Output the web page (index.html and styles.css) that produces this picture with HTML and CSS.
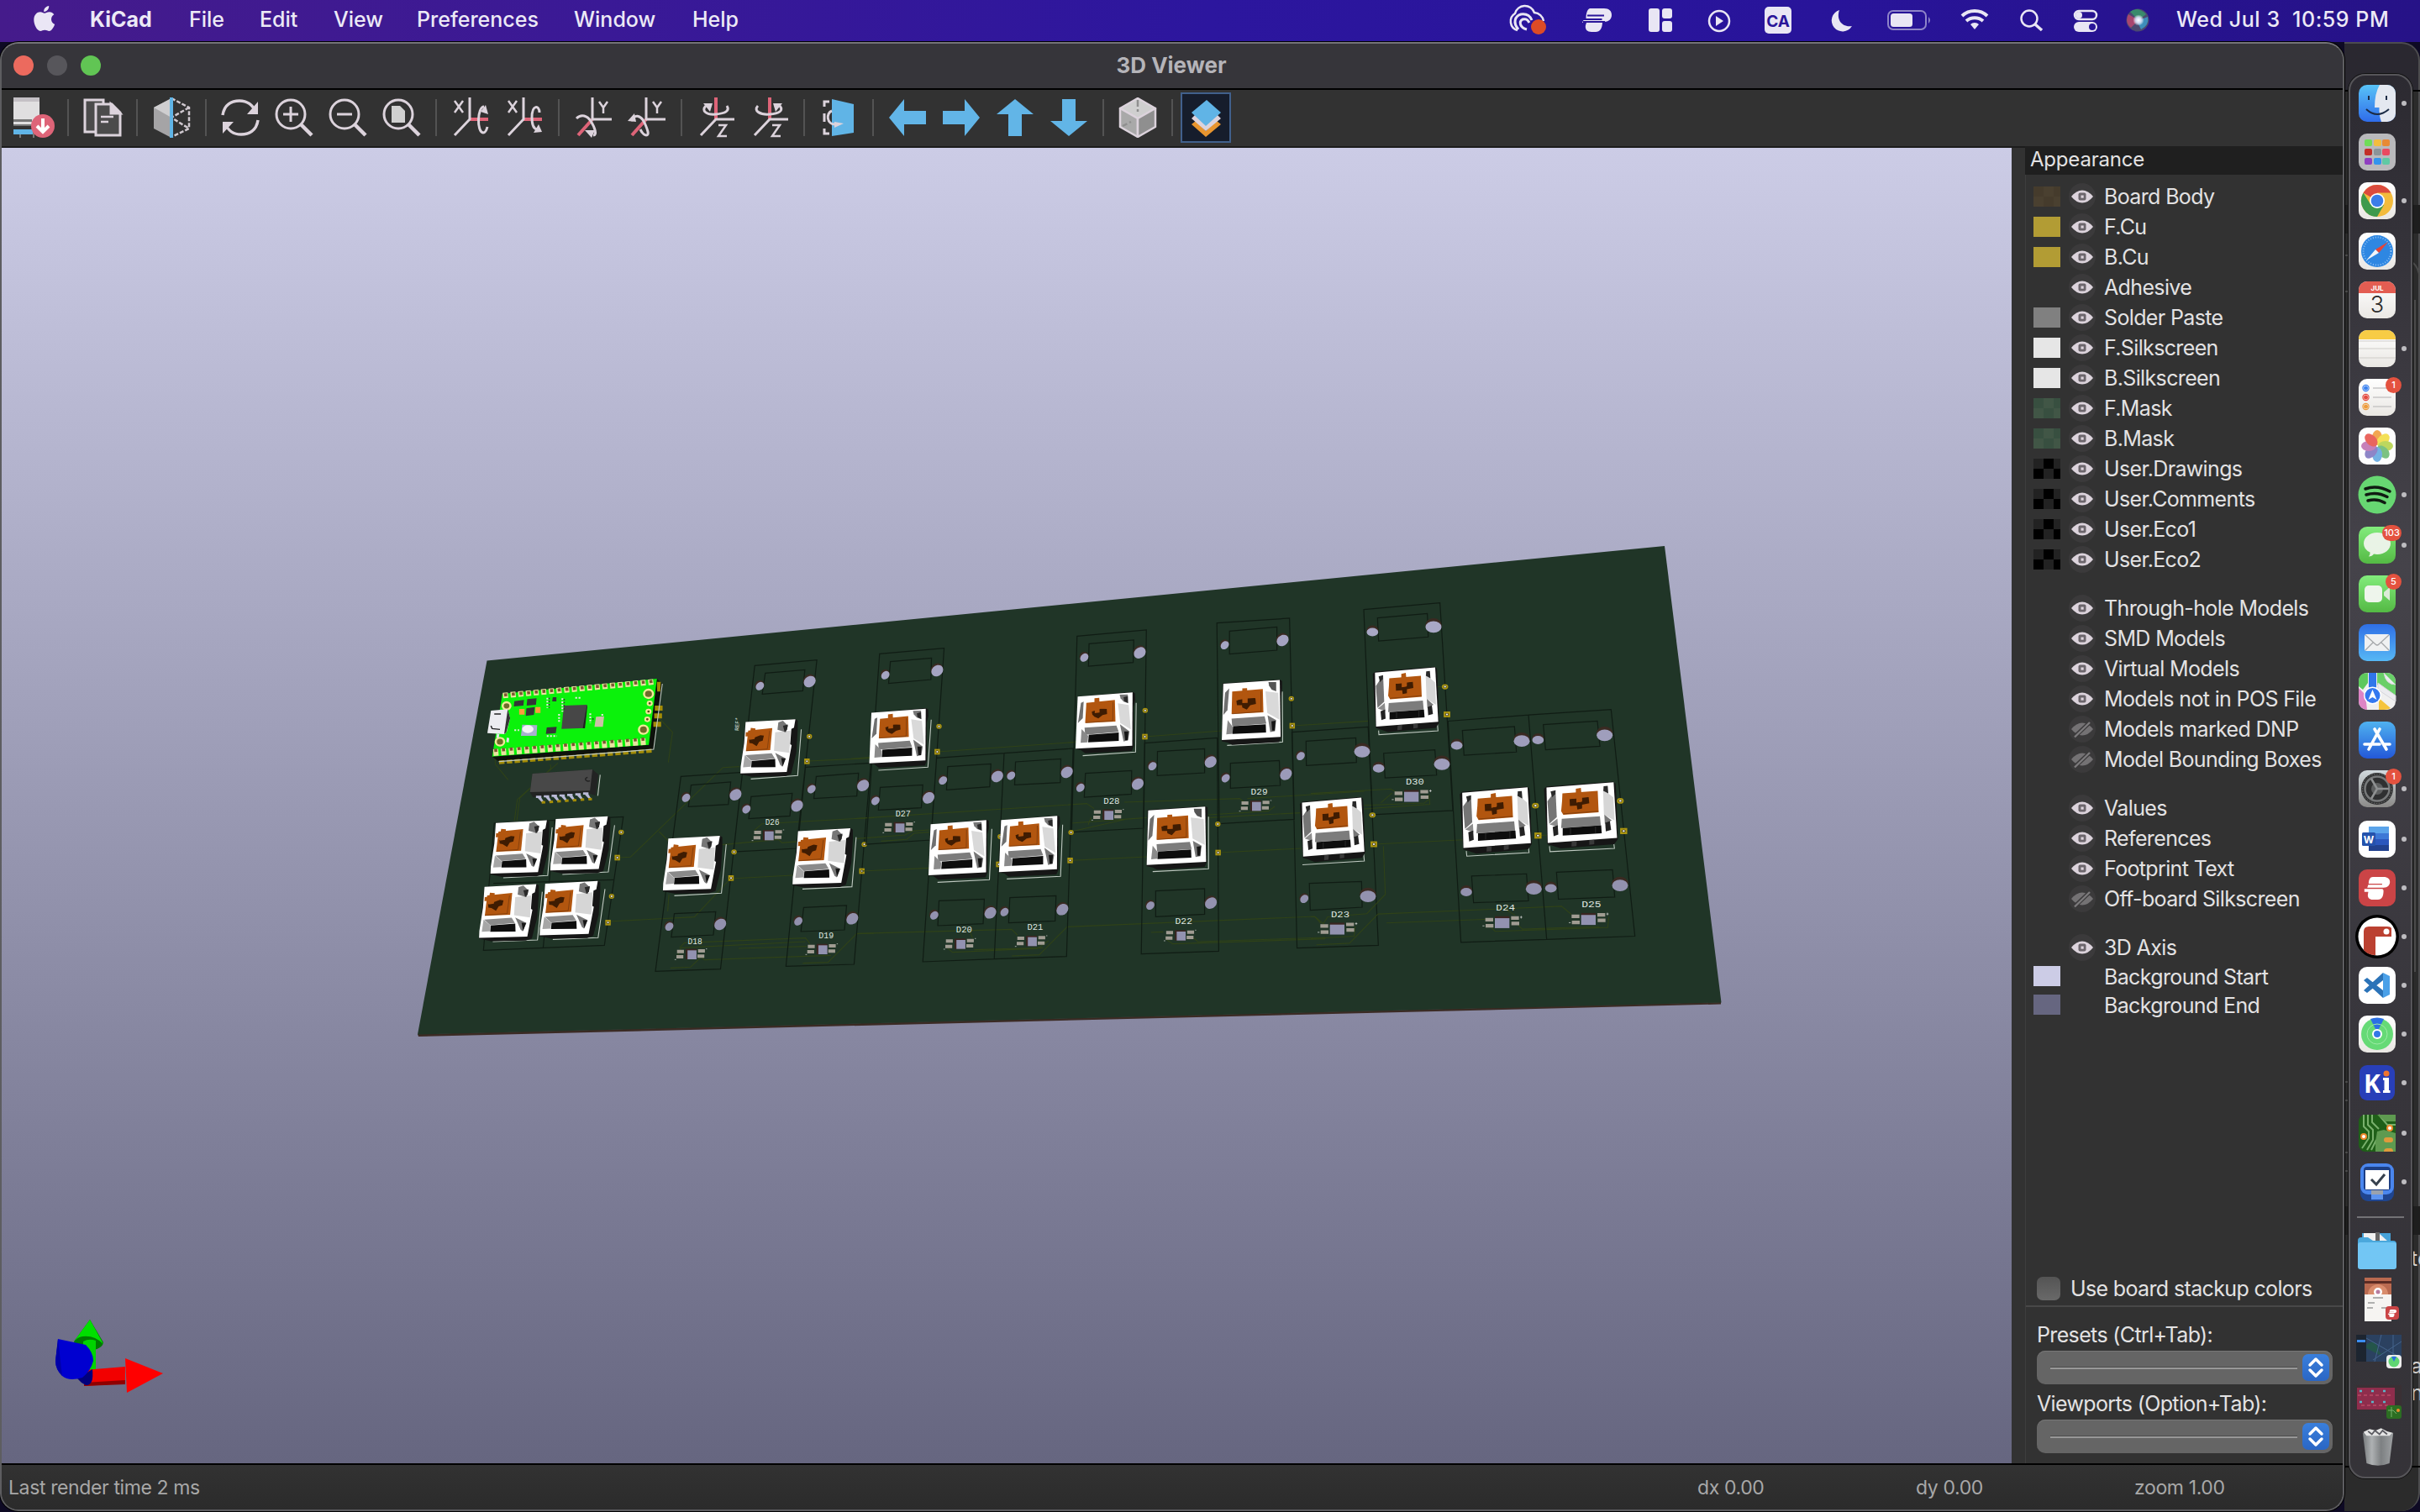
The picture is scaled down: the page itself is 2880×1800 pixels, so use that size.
FILE: index.html
```html
<!DOCTYPE html>
<html lang="en">
<head>
<meta charset="utf-8">
<title>3D Viewer</title>
<link rel="stylesheet" href="styles.css">
</head>
<body>
<svg class="defs" width="0" height="0" aria-hidden="true">
  <defs>
    <symbol id="eye" viewBox="0 0 32 32"><circle cx="16" cy="16" r="16" fill="#3b3a3b"/><path d="M3 16Q9 8.500 16 8.500T29 16Q23 23.500 16 23.500T3 16Z" fill="#dcd3dc"/><rect x="11.500" y="11.500" width="9" height="9" rx="2" fill="#6c666c"/><rect x="14.500" y="14.500" width="3.200" height="3.200" fill="#dcd3dc"/></symbol>
    <symbol id="eye-off" viewBox="0 0 32 32"><circle cx="16" cy="16" r="16" fill="#3b3a3b"/><path d="M3 16Q9 8.500 16 8.500T29 16Q23 23.500 16 23.500T3 16Z" fill="#747274"/><path d="M6 26L26 7" stroke="#3b3a3b" stroke-width="5"/><path d="M7 25.500L25 8" stroke="#7d7b7d" stroke-width="2.400"/></symbol>
    <symbol id="express" viewBox="0 0 36 32"><path d="M12 0h15c6 0 9 3 9 7s-3 8-9 8h-1H4l1.500-4H25v-1.500H6C6 4 8 0 12 0ZM0 17h26v1.500H27c0 9-2 13.500-8 13.500H12c-5 0-8-3-7-8l.5-3H0Z"/></symbol>
    <linearGradient id="metal" x1="0" y1="0" x2="0" y2="1"><stop offset="0" stop-color="#d2dade"/><stop offset="1" stop-color="#8b8a88"/></linearGradient>
    <linearGradient id="paper" x1="0" y1="0" x2="0" y2="1"><stop offset="0" stop-color="#fff"/><stop offset="1" stop-color="#e9e7e3"/></linearGradient>
    <linearGradient id="green" x1="0" y1="0" x2="0" y2="1"><stop offset="0" stop-color="#82ec7c"/><stop offset="1" stop-color="#54b944"/></linearGradient>
    <linearGradient id="blue" x1="0" y1="0" x2="0" y2="1"><stop offset="0" stop-color="#2f6fe6"/><stop offset="1" stop-color="#57b8f5"/></linearGradient>
    <linearGradient id="blue2" x1="0" y1="0" x2="0" y2="1"><stop offset="0" stop-color="#4fb2f0"/><stop offset="1" stop-color="#2358d8"/></linearGradient>
    <linearGradient id="finder" x1="0" y1="0" x2="0" y2="1"><stop offset="0" stop-color="#58c3f7"/><stop offset="1" stop-color="#2f6cea"/></linearGradient>
    <linearGradient id="trash" x1="0" y1="0" x2="1" y2="0"><stop offset="0" stop-color="#76797b"/><stop offset=".3" stop-color="#aeb1b3"/><stop offset=".6" stop-color="#7d8082"/><stop offset="1" stop-color="#9ea1a3"/></linearGradient>
    <radialGradient id="siri"><stop offset="0" stop-color="#fff"/><stop offset=".3" stop-color="#cfd8f2"/><stop offset=".6" stop-color="#fff" stop-opacity="0"/></radialGradient>

    <!-- key switch seen from its right-hand side -->
    <g id="sw1">
      <path d="M883 775L1055 764L1063 770L1063 800L1058 885L1040 962L1020 970L905 972L865 963Z" fill="#161616"/>
      <path d="M883 775L1055 765L1050 795L1041 800L1037 855L1042 858L1025 955L865 960L866 935L878 850Z" fill="#fff"/>
      <path d="M985 812L1038 806L1034 886L981 878Z" fill="#d6d6d6"/>
      <path d="M996 776L1012 770L1029 788L1022 812L993 803Z" fill="#777"/>
      <path d="M1012 788L1029 784L1026 803L1018 812Z" fill="#2a2a2a"/>
      <path d="M892 806L975 797L968 876L884 880Z" fill="#b2560f"/>
      <path d="M966 806L958 872L885 878" fill="none" stroke="#74370a" stroke-width="2"/>
      <path d="M895 838L934 822L946 824L942 842L930 846L921 862L906 852L896 850Z" fill="#3f1c02"/>
      <path d="M901 796L917 798L916 810L934 809L933 821L916 823L914 836L897 839L898 826L883 827L884 812L899 811Z" fill="#b2560f"/>
      <path d="M882 894L973 887L984 906L902 914Z" fill="#8a8a8a"/>
      <path d="M880 894L903 916L901 936L874 938Z" fill="#a6a6a6"/>
      <path d="M904 915L985 908L986 937L902 938Z" fill="#0d0d0d"/>
      <path d="M985 886L1022 906L1010 936L1003 930Z" fill="#777"/>
      <path d="M1006 905L1021 906L1011 935Z" fill="#161616"/>
    </g>
    <!-- key switch, partly turned -->
    <g id="sw2">
      <path d="M734 268L918 251L926 256L927 280L921 305L922 445L915 462L760 470L745 458L729 455Z" fill="#161616"/>
      <path d="M735 268L918 253L917 443L728 454Z" fill="#fff"/>
      <path d="M746 290L755 286L752 345L736 362Z" fill="#6f6f6f"/>
      <path d="M869 292L905 298L912 385L877 362Z" fill="#d9d9d9"/>
      <path d="M875 261L902 260L904 292L888 286L878 274Z" fill="#777"/>
      <path d="M888 270L902 266L902 290L890 284Z" fill="#2a2a2a"/>
      <path d="M764 290L859 280L861 357L760 362Z" fill="#b2560f"/>
      <path d="M853 288L852 354L762 361" fill="none" stroke="#74370a" stroke-width="2"/>
      <path d="M782 322L810 311L832 312L833 330L818 334L804 346L791 340L784 332Z" fill="#3f1c02"/>
      <path d="M791 274L807 272L808 296L824 295L824 309L808 311L808 325L792 327L792 315L775 316L776 302L791 301Z" fill="#b2560f"/>
      <path d="M758 379L864 371L872 394L760 404Z" fill="#7c7c7c"/>
      <path d="M748 384L770 408L768 431L745 433Z" fill="#8a8a8a"/>
      <path d="M772 404L872 396L872 426L770 431Z" fill="#0d0d0d"/>
      <path d="M876 367L908 392L903 424L888 428Z" fill="#777"/>
      <path d="M890 392L904 392L902 424L893 424Z" fill="#161616"/>
    </g>
    <!-- key switch, nearly front-on -->
    <g id="sw3">
      <path d="M968 672L1160 659L1168 664L1168 690L1164 720L1166 858L1158 876L1000 886L985 878L965 873Z" fill="#161616"/>
      <path d="M970 674L1160 661L1163 858L965 869Z" fill="#fff"/>
      <path d="M976 705L990 690L984 765L970 782Z" fill="#6f6f6f"/>
      <path d="M1112 700L1155 705L1159 798L1118 775Z" fill="#d9d9d9"/>
      <path d="M1122 668L1148 668L1148 700L1133 694L1124 680Z" fill="#555"/>
      <path d="M1000 701L1103 692L1105 773L998 779Z" fill="#b2560f"/>
      <path d="M1097 700L1097 770L1000 778" fill="none" stroke="#74370a" stroke-width="2"/>
      <path d="M1014 733L1046 720L1078 724L1080 744L1061 748L1049 763L1034 756L1033 748L1016 748Z" fill="#3f1c02"/>
      <path d="M1034 690L1050 689L1051 711L1074 710L1074 723L1052 725L1052 740L1034 741L1034 728L1017 729L1018 715L1034 714Z" fill="#b2560f"/>
      <path d="M998 795L1109 787L1115 812L1000 821Z" fill="#7c7c7c"/>
      <path d="M985 800L1003 825L1001 847L980 849Z" fill="#8a8a8a"/>
      <path d="M1003 821L1113 814L1114 843L1001 848Z" fill="#0d0d0d"/>
      <path d="M1119 783L1148 800L1144 838L1128 841Z" fill="#777"/>
      <path d="M1132 804L1146 802L1143 836L1134 836Z" fill="#161616"/>
    </g>
    <!-- key switch, front-on -->
    <g id="sw4">
      <path d="M221 424L230 417L442 402L450 408L452 432L458 576L446 592L275 605L250 597L232 592Z" fill="#161616"/>
      <path d="M229 420L444 404L455 573L233 588Z" fill="#fff"/>
      <path d="M232 462L258 428L262 510L238 530Z" fill="#757575"/>
      <path d="M410 425L443 450L447 520L413 502Z" fill="#d6d6d6"/>
      <path d="M242 432L258 428L257 440L247 450Z" fill="#2a2a2a"/>
      <path d="M412 416L425 415L427 438L411 430Z" fill="#2a2a2a"/>
      <path d="M280 438L393 430L396 495L283 503L276 492L279 460Z" fill="#b2560f"/>
      <path d="M283 500L395 492" stroke="#74370a" stroke-width="2"/>
      <path d="M303 455L325 453L325 466L343 462L343 450L364 449L366 468L343 472L343 484L328 487L326 475L304 476Z" fill="#3f1c02"/>
      <path d="M323 424L339 421L341 440L360 440L361 449L342 451L342 463L325 465L325 453L304 455L304 446L323 444Z" fill="#b2560f"/>
      <path d="M278 515L400 507L403 535L276 543Z" fill="#7c7c7c"/>
      <path d="M281 543L404 535L406 559L281 566Z" fill="#0d0d0d"/>
      <path d="M306 543L306 562M386 538L386 558" stroke="#2a2a2a" stroke-width="3"/>
      <path d="M239 532L264 514L266 540Z" fill="#8c8c8c"/>
      <path d="M249 540L265 535L267 563L252 568Z" fill="#222"/>
      <path d="M414 502L438 520L416 530Z" fill="#777"/>
      <path d="M417 527L432 522L436 549L419 553Z" fill="#222"/>
      <path d="M310 584L326 583L325 598L309 599ZM366 580L382 579L382 592L366 594Z" fill="#393939"/>
    </g>
    <g id="holeS"><ellipse cx="-2" cy="-2" rx="15" ry="17" transform="rotate(25)" fill="#3a2a22"/><ellipse cx="1" cy="1" rx="12.500" ry="16" transform="rotate(35)"/></g>
    <g id="holeL"><ellipse cx="-2" cy="-2" rx="20" ry="23" transform="rotate(25)" fill="#3a2a22"/><ellipse cx="1" cy="1" rx="18" ry="22" transform="rotate(40)"/></g>
    <g id="holeSr"><ellipse cx="0" cy="-3" rx="21" ry="16" fill="#3a2a22"/><ellipse cx="0" cy="2" rx="20.500" ry="13"/></g>
    <g id="holeLr"><ellipse cx="0" cy="-4" rx="29" ry="21" fill="#3a2a22"/><ellipse cx="0" cy="2" rx="28.500" ry="18"/></g>
    <g id="padR"><circle r="9" fill="#ab9510"/><circle r="4.500" fill="#3d3a20"/><circle r="3" fill="#eee"/></g>
    <g id="padQ"><rect x="-9" y="-10" width="18" height="20" fill="#ab9510"/><circle r="5" fill="#3d3a20"/><circle r="3" fill="#eee"/></g>
    <g id="led"><path d="M-48-16h23v12h-23zM-50 3h23v12h-23zM22-18h23v12h-23zM20 1h23v12h-23z" fill="#a09c92"/><path d="M-19-19h36v37h-36z" fill="#3a2521"/><path d="M-13-14h30v32h-30z" fill="#9292b0"/><path d="M-56 19h5M48-19h4" stroke="#ddd" stroke-width="2"/></g>
    <g id="ledr"><path d="M-60-16h28v11h-28zM-59 3h28v11h-28zM32-21h28v11h-28zM33-4h28v11h-28z" fill="#a09c92"/><path d="M-26-21h52v10h-52z" fill="#3a2521"/><path d="M-26-15h52v31h-52z" fill="#9292b0"/><path d="M-70 9h7M64-18h8M68-22v8" stroke="#ddd" stroke-width="2"/></g>
  </defs>
</svg>

<header class="menubar">
  <svg class="apple" viewBox="0 0 26 32" fill="#eae6f5"><path d="M18.200 0c.3 3.800-2.800 7-6 7C11.700 3.600 15 .3 18.200 0ZM13 8.800c1.500 0 3.300-1.700 6-1.500 2 .1 4 1 5.300 2.900-4.900 3-4 9.800.9 11.700-1 2.700-3.700 8-6.700 8.100-2 0-2.700-1.200-5.200-1.200s-3.300 1.200-5.200 1.200C4 30 .3 22 .3 16.800.3 10.500 4.200 7.300 7.900 7.300c2.200 0 3.800 1.500 5.100 1.500Z"/></svg>
  <b class="m m1">KiCad</b><span class="m m2">File</span><span class="m m3">Edit</span><span class="m m4">View</span><span class="m m5">Preferences</span><span class="m m6">Window</span><span class="m m7">Help</span>
  <svg class="tray" viewBox="1780 0 800 48" fill="none" stroke="#e9e6f4" stroke-width="2.500">
    <path d="M1806 36a11 11 0 0 1-3-20 12 12 0 0 1 23-1 12 12 0 0 1 11 10"/><path d="M1807 35c-7-8-4-16 3-18 7-1 11 2 13 7M1817 35c-8-2-10-9-5-12 4-1 6 0 8 4" stroke-width="3"/><circle cx="1831" cy="32" r="9" fill="#dd4b26" stroke="none"/>
    <g fill="#e9e6f4" stroke="none"><path d="M1892 10h17c6 0 9 3 9 8s-4 8-9 8h-2c0 8-3 12-8 12h-5c-5 0-8-3-7-8l1-3h-5l1.500-3h22v-2h-19c0-7 2-12 5-12Z"/><path d="M1889 18.500h20M1884 26h26" stroke="#2a1599" stroke-width="2"/>
    <rect x="1962" y="10" width="13" height="28" rx="3"/><rect x="1978" y="10" width="12" height="12" rx="3"/><rect x="1978" y="25" width="12" height="13" rx="3"/>
    <path d="M2042 19l9 6-9 6Z"/><rect x="2100" y="8" width="32" height="32" rx="5"/></g>
    <circle cx="2046" cy="25" r="12"/>
    <text x="2116" y="32" text-anchor="middle" class="ca">CA</text>
    <path d="M2189 12a13 13 0 1 0 15 19c-12 2-19-8-15-19Z" fill="#e9e6f4" stroke="none"/>
    <rect x="2247" y="13" width="45" height="22" rx="6" stroke="#8e84c8" stroke-width="2"/><path d="M2295 20q4 4 0 8Z" fill="#8e84c8" stroke="none"/><rect x="2250" y="16" width="26" height="16" rx="3.500" fill="#e9e6f4" stroke="none"/>
    <path d="M2335 19a22 22 0 0 1 30 0M2340 25a15 15 0 0 1 20 0" stroke-width="4"/><path d="M2350 35l-5-6a7 7 0 0 1 10 0Z" fill="#e9e6f4" stroke="none"/>
    <circle cx="2415" cy="22" r="9.500"/><path d="M2422 29l8 7" stroke-width="3.500"/>
    <rect x="2469" y="13" width="26" height="10" rx="5"/><circle cx="2474" cy="18" r="4" fill="#e9e6f4" stroke="none"/><rect x="2468" y="26" width="28" height="12" rx="6" fill="#e9e6f4" stroke="none"/><circle cx="2490" cy="32" r="4" fill="#2a1599" stroke="none"/>
    <g stroke="none"><circle cx="2544" cy="24" r="13.500" fill="#4b4a70"/><path d="M2535 14q9-7 19 3l-9 7Z" fill="#3a8a6c"/><path d="M2533 17q-5 9 3 16l9-9Z" fill="#a8466f"/><path d="M2556 20q2 10-8 15l-5-10Z" fill="#3d8dbb"/><circle cx="2545" cy="24" r="11" fill="url(#siri)"/></g>
  </svg>
  <span class="clock">Wed Jul 3&nbsp; 10:59 PM</span>
</header>

<div class="desk">
<main class="window">
  <div class="titlebar"><i class="light red"></i><i class="light grey"></i><i class="light green"></i><h1>3D Viewer</h1></div>
  <nav class="toolbar">
    <svg class="tool" viewBox="0 0 48 48"><path d="M0 0h31v34H0z" fill="#e0dfe0"/><path d="M0 0h31v5H0z" fill="#c4c0c5"/><path d="M0 26h22v3H0zM0 32h22v2H0z" fill="#777"/><path d="M0 38h24v6H0z" fill="#60b4e6"/><path d="M8 44v4M24 36v12" stroke="#777" stroke-width="2"/><circle cx="35" cy="34" r="14" fill="#de6478"/><path d="M35 25v14M28 34l7 7 7-7" fill="none" stroke="#fff" stroke-width="4"/></svg><i class="sep"></i>
    <svg class="tool" viewBox="0 0 48 48" stroke="#dcd3dc" stroke-width="3" fill="#4b4b4b"><path d="M3 3h22v38H3z"/><path d="M16 8h19l10 10v27H16z"/><path d="M34 8v11h11z" fill="#dcd3dc"/><path d="M22 23h15M22 29h9" stroke-width="2.500"/></svg><i class="sep"></i>
    <svg class="tool" viewBox="0 0 48 48"><path d="M24 1L3 12v25l21 11z" fill="#a5a4a6"/><path d="M24 1L3 12l21 12z" fill="#cfced0"/><path d="M24 1l21 11v25L24 47M45 12L24 24l21 13" fill="none" stroke="#cfc8cf" stroke-width="2.500" stroke-dasharray="5 2"/><path d="M24 0v48" stroke="#60b4e6" stroke-width="4"/></svg><i class="sep"></i>
    <svg class="tool" viewBox="0 0 48 48" fill="none" stroke="#dcd3dc" stroke-width="3.500"><path d="M3 21C5 8 14 4 23 4s16 5 19 13M45 27c-2 13-11 17-20 17S9 39 6 31"/><path d="M45 5v15H32zM3 43V29h13z" fill="#dcd3dc" stroke="none"/></svg>
    <svg class="tool" viewBox="0 0 48 48" fill="none" stroke="#dcd3dc" stroke-width="3"><circle cx="20" cy="20" r="17"/><path d="M11 20h18M20 11v18"/><path d="M32 32l13 13" stroke-width="4.500"/></svg>
    <svg class="tool" viewBox="0 0 48 48" fill="none" stroke="#dcd3dc" stroke-width="3"><circle cx="20" cy="20" r="17"/><path d="M11 20h18"/><path d="M32 32l13 13" stroke-width="4.500"/></svg>
    <svg class="tool" viewBox="0 0 48 48" fill="none" stroke="#dcd3dc" stroke-width="3"><circle cx="20" cy="20" r="17"/><path d="M12 10h10l6 6v14H12z" fill="#d0d0d0" stroke="none"/><path d="M32 32l13 13" stroke-width="4.500"/></svg><i class="sep"></i>
    <svg class="tool" viewBox="0 0 48 48" fill="none" stroke="#dcd3dc" stroke-width="3"><path d="M23 26h22" stroke="#de6478" stroke-width="4"/><path d="M23 0v26L5 45"/><path d="M5 4l10 14M15 4L5 18" stroke-width="2.500"/><path d="M40 11c-8 0-9 30-1 31 3 0 4-3 5-7"/><path d="M36 17l6-8 3 11z" fill="#dcd3dc" stroke="none"/></svg>
    <svg class="tool" viewBox="0 0 48 48" fill="none" stroke="#dcd3dc" stroke-width="3"><path d="M23 26h22" stroke="#de6478" stroke-width="4"/><path d="M23 0v26L5 45"/><path d="M5 4l10 14M15 4L5 18" stroke-width="2.500"/><path d="M42 18c0-9-9-10-9 6 0 10 3 14 7 14"/><path d="M35 42l6-10 4 9z" fill="#dcd3dc" stroke="none"/></svg><i class="sep"></i>
    <svg class="tool" viewBox="0 0 48 48" fill="none" stroke="#dcd3dc" stroke-width="3"><path d="M23 26L6 45" stroke="#de6478" stroke-width="4"/><path d="M23 0v26h23"/><path d="M31 5l5 7 5-7M36 12v7" stroke-width="2.500"/><path d="M4 25c6-6 13-3 17 3 5 8 8 17 3 17"/><path d="M14 39l8 9 4-9z" fill="#dcd3dc" stroke="none"/></svg>
    <svg class="tool" viewBox="0 0 48 48" fill="none" stroke="#dcd3dc" stroke-width="3"><path d="M23 26L6 45" stroke="#de6478" stroke-width="4"/><path d="M23 0v26h23"/><path d="M31 5l5 7 5-7M36 12v7" stroke-width="2.500"/><path d="M5 28c4-8 11-8 16 2 4 9 6 15 2 15-3 0-5-3-7-7"/><path d="M1 28l8-9 2 10z" fill="#dcd3dc" stroke="none"/></svg><i class="sep"></i>
    <svg class="tool" viewBox="0 0 48 48" fill="none" stroke="#dcd3dc" stroke-width="3"><path d="M24 26V0" stroke="#de6478" stroke-width="4"/><path d="M46 26H24L6 45"/><path d="M27 33h9l-9 13h10" stroke-width="2.500"/><path d="M12 10c-6 6 1 11 12 10s17-4 13-10"/><path d="M9 7l11 0-3 10z" fill="#dcd3dc" stroke="none"/></svg>
    <svg class="tool" viewBox="0 0 48 48" fill="none" stroke="#dcd3dc" stroke-width="3"><path d="M24 26V0" stroke="#de6478" stroke-width="4"/><path d="M46 26H24L6 45"/><path d="M27 33h9l-9 13h10" stroke-width="2.500"/><path d="M10 10c-6 6 3 11 14 10s17-4 12-10"/><path d="M39 7l-11 0 3 10z" fill="#dcd3dc" stroke="none"/></svg><i class="sep"></i>
    <svg class="tool" viewBox="0 0 48 48" fill="none" stroke="#dcd3dc" stroke-width="3"><path d="M16 2l26 6v34l-26 4z" fill="#60b4e6" stroke="none"/><path d="M13 5H7v6M7 19v10M7 37v6h6M16 16c-7 2-7 17 5 16"/><path d="M19 29l11 2-11 5z" fill="#dcd3dc" stroke="none"/></svg><i class="sep"></i>
    <svg class="tool" viewBox="0 0 48 48" fill="#62b5e7"><path d="M2 24L20 2v14h26v16H20v14z"/></svg>
    <svg class="tool" viewBox="0 0 48 48" fill="#62b5e7"><path d="M46 24L28 2v14H2v16h26v14z"/></svg>
    <svg class="tool" viewBox="0 0 48 48" fill="#62b5e7"><path d="M24 2L2 20h14v26h16V20h14z"/></svg>
    <svg class="tool" viewBox="0 0 48 48" fill="#62b5e7"><path d="M24 46L2 28h14V2h16v26h14z"/></svg><i class="sep"></i>
    <svg class="tool" viewBox="0 0 48 48" stroke="#dcd3dc" stroke-width="2.500" stroke-linejoin="round"><path d="M24 1l21 12-21 12L3 13z" fill="#cfcfcf"/><path d="M3 13l21 12v22L3 35z" fill="#a9a9a9"/><path d="M45 13L24 25v22l21-12z" fill="#8f8f8f"/><path d="M24 3v14" stroke="#8f8f8f" stroke-dasharray="8 3"/><path d="M6 34l10-5" stroke="#8f8f8f" stroke-dasharray="6 3"/></svg><i class="sep"></i>
    <span class="active"><svg viewBox="0 0 60 60"><path d="M13 38l5-4 12 12 13-12 5 4-18 15z" fill="#e8952f"/><path d="M13 31l5-5 12 13 13-13 5 5-18 15z" fill="#dcd3dc"/><path d="M31 9l17 15-18 16-17-16z" fill="#60b4e6"/></svg></span>
  </nav>

  <div class="content">
    <section class="canvas">
      <svg class="scene" viewBox="2 176 2392 1564">
        <path d="M497 1231L2048 1193V1195.500L498 1234Z" fill="#3b2b24"/>
        <path d="M579.500 786.500L1981 650L2048.500 1193.500L497 1231.500Z" fill="#203527"/>
        <!-- left third of the board -->
        <g transform="translate(480 740) scale(.35714 .33333)">
          <g class="trace">
            <path d="M713 843L757 841L1065 521L1120 518M682 1071L970 1055L1090 918L1297 906M1350 498L1568 487M855 348L897 395L883 503M305 480L307 510L349 565M515 505L380 635L370 712M490 510L492 525L388 630L378 712M852 750L885 785M920 1165L937 1147L1340 1130L1355 1150M990 1195L1003 1208L1425 1192M890 1237L957 1234L990 1200M1117 1167L1345 1160M915 1190L925 1165L1340 1143M1331 1220L1415 1217L1510 1115L1568 1113M1170 745L1195 722L1568 700M1062 797L1250 778L1262 790L1320 785M885 975L881 1035"/>
          </g>
          <g class="court">
            <path d="M925 553L1130 538L1057 1241L840 1249ZM1171 157L1378 137L1310 810L1100 822ZM1340 520L1558 505L1502 1224L1275 1231ZM303 720L733 697L670 1156L267 1174ZM505 710L466 1165M300 935L700 922"/>
            <path d="M1206 184L1338 172L1331 247L1196 259ZM1159 625L1296 613L1288 694L1151 704ZM959 584L1091 573L1083 653L950 661ZM903 1043L1041 1036L1033 1119L893 1127ZM1376 553L1517 541L1511 623L1368 632ZM1334 1021L1477 1014L1470 1101L1325 1107Z"/>
          </g>
          <g fill="#a3a2c0"><use href="#holeS" x="1188" y="229"/><use href="#holeL" x="1354" y="213"/></g>
          <g fill="#9a99b8"><use href="#holeS" x="1143" y="669"/><use href="#holeS" x="942" y="628"/><use href="#holeS" x="1360" y="597"/><use href="#holeL" x="1312" y="657"/><use href="#holeL" x="1107" y="617"/><use href="#holeL" x="1532" y="584"/></g>
          <g fill="#9291ae"><use href="#holeS" x="886" y="1088"/><use href="#holeS" x="1316" y="1069"/><use href="#holeL" x="1056" y="1080"/><use href="#holeL" x="1496" y="1060"/></g>
          <use href="#padR" x="1353" y="410"/><use href="#padR" x="726" y="752"/><use href="#padR" x="694" y="981"/><use href="#padR" x="1102" y="823"/><use href="#padR" x="1536" y="796"/>
          <use href="#padQ" x="1345" y="499"/><use href="#padQ" x="713" y="843"/><use href="#padQ" x="682" y="1075"/><use href="#padQ" x="1092" y="916"/><use href="#padQ" x="1528" y="891"/>
          <use href="#led" x="1217" y="763"/><use href="#led" x="960" y="1188"/><use href="#led" x="1396" y="1170"/>
          <path class="silk" d="M1326 385L1314 550L1158 562M1076 795L1060 970L903 979M1509 770L1495 947L1330 955M496 735L481 907L333 915M704 727L683 894L530 903M463 965L447 1137L298 1143M672 955L649 1129L498 1135"/>
          <g class="ref"><text x="1206" y="726" textLength="47" lengthAdjust="spacingAndGlyphs">D26</text><text x="948" y="1152" textLength="48" lengthAdjust="spacingAndGlyphs">D18</text><text x="1384" y="1132" textLength="50" lengthAdjust="spacingAndGlyphs">D19</text><text class="tiny" transform="translate(1117 390) rotate(-86)" textLength="48" lengthAdjust="spacingAndGlyphs">REF*</text></g>
          <use href="#sw1"/>
          <use href="#sw1" transform="translate(288.500 -410) scale(.965 .992)"/>
          <use href="#sw1" transform="translate(-566 -36) scale(.99 .975)"/>
          <use href="#sw1" transform="translate(-384 -62) scale(1.010 .99)"/>
          <use href="#sw1" transform="translate(-617 184) scale(1.005 .985)"/>
          <use href="#sw1" transform="translate(-428 165) scale(1.020 .995)"/>
          <use href="#sw1" transform="translate(419 -46) scale(1.015 1.025)"/>
          <!-- Raspberry Pi Pico -->
          <path d="M845 204L862 222L835 455L316 498L296 482Z" fill="#0e120c"/>
          <path d="M845 215L858 215L856 250L846 250ZM838 300h26v18h-26zM836 328h26v18h-26zM833 358h26v18h-26z" fill="#a38c07"/>
          <path d="M319 503L830 461" stroke="#a38c07" stroke-width="13" stroke-dasharray="18 7.900"/>
          <path d="M330 258L845 204L818 440L296 482Z" fill="#0bf20b"/>
          <path d="M332 264L836 215" stroke="#e9e3a0" stroke-width="20" stroke-dasharray="17 8.600"/>
          <path d="M336 262L836 213" stroke="#7b5632" stroke-width="11" stroke-dasharray="10 15.600"/>
          <path d="M300 468L812 428" stroke="#e9e3a0" stroke-width="24" stroke-dasharray="17 8.900"/>
          <path d="M303 460L812 419" stroke="#7b5632" stroke-width="11" stroke-dasharray="10 15.900"/>
          <g fill="#6f6a2a" stroke="#f0e898" stroke-width="7"><circle cx="344" cy="301" r="13"/><circle cx="817" cy="258" r="15"/><circle cx="322" cy="429" r="14"/><circle cx="800" cy="386" r="15"/></g>
          <g fill="#5d4822" stroke="#f0e898" stroke-width="6"><circle cx="821" cy="292" r="7"/><circle cx="817" cy="321" r="7"/><circle cx="813" cy="349" r="7"/></g>
          <path d="M292 318L348 313L356 345L345 392L338 402L280 398Z" fill="#ececf0"/><path d="M348 313L356 345L343 395L336 402Z" fill="#333"/><path d="M303 330h22M292 372l4 10 26 3" stroke="#222" stroke-width="4" fill="none"/>
          <path d="M370 284L402 280L400 300L368 303ZM413 277L444 274L442 297L411 300ZM410 310L438 305L435 333L408 337ZM478 378L511 376L508 398L475 401ZM498 270h12v15h-14z" fill="#353537"/>
          <path d="M386 312h18v20h-18zM440 305h17v21h-17z" fill="#ff9b3d"/>
          <path d="M535 300L612 297L604 380L527 383Z" fill="#474747"/><path d="M612 297L613 304L605 381L598 381Z" fill="#1f1f1f"/>
          <path d="M642 340L669 338L665 376L637 376Z" fill="#cbbfa8"/>
          <path d="M396 368L446 370L444 408L392 408Z" fill="#a8b0cf"/><ellipse cx="415" cy="384" rx="19" ry="14" fill="#f4f4f6"/>
          <path d="M345 414l8 2-2 16-8-2zM312 400l8 2-2 14-8-2z" fill="#e4e4ea"/>
          <path d="M480 272v36M530 274v48M519 330v30M573 272h18M623 328v34M370 388h16M478 409h34M663 330v8" stroke="#e8e8e0" stroke-width="6" stroke-dasharray="6 5"/>
          <path d="M486 272v36M536 276v40M632 345v12" stroke="#333" stroke-width="4" stroke-dasharray="5 6"/>
          <path d="M863 222L834 456L318 500" class="silk"/>
          <!-- DIP-14 -->
          <path d="M656 547L648 622" class="silk"/>
          <path d="M430 543L630 528L650 546L641 621L612 612L432 628L422 609Z" fill="#222323"/>
          <path d="M430 543L630 528L622 604L422 609Z" fill="#484848"/>
          <path d="M614 556q-10 4-6 10t14 3" stroke="#222" stroke-width="4" fill="none"/>
          <g fill="#b9b9d6"><path id="pin" d="M442 622h18l0 7 8 14-6 3-14-16h-6z"/><use href="#pin" x="26" y="-2"/><use href="#pin" x="52" y="-4"/><use href="#pin" x="78" y="-5"/><use href="#pin" x="104" y="-7"/><use href="#pin" x="131" y="-9"/><use href="#pin" x="157" y="-12"/></g>
          <path d="M461 646L636 633" stroke="#a38c07" stroke-width="9" stroke-dasharray="12 14"/>
        </g>
        <!-- middle of the board -->
        <g transform="translate(1020 740) scale(.35714 .33333)">
          <g class="trace">
            <path d="M0 1114L515 1099L535 1120M515 1194L607 1190L700 1090L1525 1053L1560 1085M267 465L730 430M-20 490L50 484M0 703L765 650L790 668M15 891L240 880M710 853L965 840M1203 825L1480 810M960 411L1215 390M1450 372L1703 355M300 1165L318 1181L600 1168L638 1140M390 1172L620 1165M980 1110L1020 1108M1030 1135L1052 1151L1560 1133M1120 1128L1135 1143L1560 1128M0 775L160 762L185 748L240 744M80 784L165 778L190 756L240 752M713 720L965 700M713 750L900 705M1170 690L1370 677L1392 660M1170 700L1480 683M890 645L1275 632L1290 645M1300 632L1690 606M770 725L780 700M375 1105L385 1130"/>
          </g>
          <g class="court">
            <path d="M75 115L290 95L246 780L30 795ZM265 487L490 470L457 1205L219 1215ZM490 470L720 453L698 1196L457 1205M733 52L964 30L955 738L715 752ZM958 434L1200 415L1205 1177L947 1187ZM1199 5L1441 -12L1457 706L1207 722ZM1449 395L1703 376L1737 1156L1466 1166Z"/>
            <path d="M111 143L248 130L246 207L105 221ZM77 592L219 583L214 665L71 673ZM302 518L446 508L442 590L298 601ZM273 997L424 991L420 1079L269 1086ZM528 501L679 490L677 575L525 583ZM509 986L663 979L660 1069L505 1076ZM773 79L922 66L920 146L771 159ZM761 542L915 532L914 616L757 627ZM1001 464L1158 454L1158 540L1000 550ZM995 962L1158 954L1158 1045L995 1054ZM1241 34L1399 19L1399 102L1241 116ZM1244 506L1407 496L1410 585L1244 595ZM1496 427L1662 415L1664 503L1497 514ZM1507 935L1681 928L1683 1020L1510 1031Z"/>
          </g>
          <g fill="#a5a4c2"><use href="#holeS" x="94" y="190"/><use href="#holeS" x="757" y="127"/><use href="#holeS" x="1225" y="83"/><use href="#holeL" x="267" y="174"/><use href="#holeL" x="942" y="110"/><use href="#holeL" x="1418" y="66"/></g>
          <g fill="#9b9ab9"><use href="#holeS" x="61" y="639"/><use href="#holeS" x="286" y="566"/><use href="#holeS" x="513" y="549"/><use href="#holeS" x="744" y="592"/><use href="#holeS" x="984" y="515"/><use href="#holeS" x="1228" y="558"/><use href="#holeS" x="1478" y="479"/><use href="#holeL" x="238" y="628"/><use href="#holeL" x="467" y="552"/><use href="#holeL" x="699" y="537"/><use href="#holeL" x="935" y="579"/><use href="#holeL" x="1178" y="500"/><use href="#holeL" x="1429" y="544"/></g>
          <g fill="#9392af"><use href="#holeS" x="257" y="1048"/><use href="#holeS" x="491" y="1036"/><use href="#holeS" x="977" y="1013"/><use href="#holeS" x="1490" y="989"/><use href="#holeL" x="444" y="1039"/><use href="#holeL" x="684" y="1027"/><use href="#holeL" x="1179" y="1004"/></g>
          <use href="#padR" x="273" y="374"/><use href="#padR" x="477" y="768"/><use href="#padR" x="713" y="753"/><use href="#padR" x="960" y="317"/><use href="#padR" x="1202" y="723"/><use href="#padR" x="1447" y="275"/>
          <use href="#padQ" x="267" y="465"/><use href="#padQ" x="472" y="867"/><use href="#padQ" x="710" y="853"/><use href="#padQ" x="959" y="411"/><use href="#padQ" x="1203" y="825"/><use href="#padQ" x="1450" y="372"/>
          <use href="#led" x="141" y="735"/><use href="#led" x="344" y="1151"/><use href="#led" x="582" y="1141"/><use href="#led" x="837" y="690"/><use href="#led" x="1078" y="1121"/><use href="#led" x="1329" y="658"/>
          <path class="silk" d="M247 350L236 520L71 531M449 740L441 922L268 931M685 725L678 910L499 919M930 290L928 466L752 479M1171 697L1171 883L985 893M1417 250L1418 430L1233 442"/>
          <g class="ref"><text x="128" y="697" textLength="51" lengthAdjust="spacingAndGlyphs">D27</text><text x="330" y="1111" textLength="53" lengthAdjust="spacingAndGlyphs">D20</text><text x="567" y="1102" textLength="53" lengthAdjust="spacingAndGlyphs">D21</text><text x="821" y="651" textLength="54" lengthAdjust="spacingAndGlyphs">D28</text><text x="1060" y="1081" textLength="57" lengthAdjust="spacingAndGlyphs">D22</text><text x="1312" y="619" textLength="56" lengthAdjust="spacingAndGlyphs">D29</text></g>
          <use href="#sw2"/>
          <use href="#sw2" transform="translate(-680 65) scale(.99 .972)"/>
          <use href="#sw2" transform="translate(-501 461) scale(1.015 .98)"/>
          <use href="#sw2" transform="translate(-272 441) scale(1.023 1)"/>
          <use href="#sw3"/>
          <use href="#sw3" transform="translate(260 -472) scale(.99 1.030)"/>
        </g>
        <!-- right third of the board -->
        <g transform="translate(1560 640) scale(.33333 .38265)">
          <g class="trace">
            <path d="M259 960L266 1110L200 1170L60 1180L45 1200M20 1267L138 1262L240 1171L895 1147L930 1172M225 954L545 940M811 927L850 925M270 1199L640 1187M640 1210L658 1225L1060 1213L1064 1180M740 1205L755 1218L1030 1210M0 796L285 782L305 792M190 833L405 826L420 815M190 844L425 830L422 800M250 825L290 795M0 1248L155 1240L158 1210M450 464L479 464M0 1180L15 1180L35 1200M700 1160L730 1175"/>
          </g>
          <g class="court">
            <path d="M189 224L461 203L507 849L220 862ZM490 571L777 552L842 1250L536 1259ZM777 552L1072 535L1157 1240L842 1250"/>
            <path d="M238 250L416 236L419 309L242 322ZM260 671L443 660L449 739L265 748ZM541 600L727 588L734 667L547 677ZM574 1053L770 1046L777 1130L581 1136ZM830 582L1023 571L1032 649L838 660ZM877 1041L1077 1033L1085 1118L884 1125Z"/>
          </g>
          <g fill="#a9a8c6"><use href="#holeSr" x="220" y="292"/><use href="#holeLr" x="438" y="276"/></g>
          <g fill="#9f9ebc"><use href="#holeSr" x="242" y="716"/><use href="#holeSr" x="521" y="645"/><use href="#holeSr" x="811" y="628"/><use href="#holeLr" x="468" y="703"/><use href="#holeLr" x="753" y="631"/><use href="#holeLr" x="1049" y="613"/><use href="#holeLr" x="183" y="664"/></g>
          <g fill="#9392af"><use href="#holeSr" x="555" y="1101"/><use href="#holeSr" x="857" y="1089"/><use href="#holeLr" x="796" y="1091"/><use href="#holeLr" x="1104" y="1080"/><use href="#holeLr" x="204" y="1114"/></g>
          <g transform="translate(479 464) scale(1.250 .9)"><use href="#padR"/></g><g transform="translate(220 863) scale(1.250 .9)"><use href="#padR"/></g><g transform="translate(802 834) scale(1.350 .95)"><use href="#padR"/></g><g transform="translate(1105 819) scale(1.350 .98)"><use href="#padR"/></g>
          <g transform="translate(486 550) scale(1.300 .9)"><use href="#padQ"/></g><g transform="translate(225 954) scale(1.300 .9)"><use href="#padQ"/></g><g transform="translate(811 927) scale(1.400 .95)"><use href="#padQ"/></g><g transform="translate(1117 913) scale(1.400 .95)"><use href="#padQ"/></g>
          <use href="#ledr" x="359" y="806"/><use href="#ledr" x="94" y="1219"/><use href="#ledr" x="683" y="1199"/><use href="#ledr" x="991" y="1189"/>
          <path class="silk" d="M450 560L454 601L243 613L242 600M186 960L191 1006L-30 1018M775 950L779 980L557 991L555 975M1080 940L1084 967L854 977L852 960"/>
          <g class="ref refr"><text x="339" y="769" textLength="65" lengthAdjust="spacingAndGlyphs">D30</text><text x="72" y="1182" textLength="66" lengthAdjust="spacingAndGlyphs">D23</text><text x="661" y="1161" textLength="68" lengthAdjust="spacingAndGlyphs">D24</text><text x="967" y="1150" textLength="70" lengthAdjust="spacingAndGlyphs">D25</text></g>
          <use href="#sw4"/>
          <use href="#sw4" transform="translate(-257 406) scale(.985 .997)"/>
          <use href="#sw4" transform="translate(292 363) scale(1.085 1.025)"/>
          <use href="#sw4" transform="translate(586 347) scale(1.115 1.025)"/>
        </g>
        <!-- axis gizmo -->
        <path d="M97 1594h17v42h-17z" fill="#00d400"/>
        <path d="M107 1571L123 1598Q122 1606 106 1608Q90 1606 88 1597Z" fill="#007a00"/><path d="M107 1571L123 1600Q112 1589 98 1591Q92 1592 88 1597Z" fill="#00df00"/><path d="M99 1597q7-4 15-1v35h-8q0-15-7-20z" fill="#00d400"/>
        <path d="M100 1631L149 1627V1647L100 1650Z" fill="#f20000"/><path d="M149 1617L194 1635L151 1658Z" fill="#f00"/><path d="M100 1646L149 1643V1648L100 1650Z" fill="#8f0000"/>
        <path d="M92 1641L110 1630Q112 1650 102 1649Q96 1646 92 1641Z" fill="#00007c"/>
        <path d="M69 1594L102 1601Q111 1610 111 1620Q108 1632 98 1640Q82 1645 74 1638Q66 1630 66 1620Z" fill="#0000d0"/><path d="M69 1594L74 1638Q66 1630 66 1620Z" fill="#0000a8"/>
      </svg>
    </section>
    <aside class="panel">
      <h2>Appearance</h2>
      <div class="rows">
        <div class="row"><i class="sw body"></i><svg><use href="#eye"/></svg><span>Board Body</span></div>
        <div class="row"><i class="sw cu"></i><svg><use href="#eye"/></svg><span>F.Cu</span></div>
        <div class="row"><i class="sw cu"></i><svg><use href="#eye"/></svg><span>B.Cu</span></div>
        <div class="row"><i class="sw"></i><svg><use href="#eye"/></svg><span>Adhesive</span></div>
        <div class="row"><i class="sw paste"></i><svg><use href="#eye"/></svg><span>Solder Paste</span></div>
        <div class="row"><i class="sw white"></i><svg><use href="#eye"/></svg><span>F.Silkscreen</span></div>
        <div class="row"><i class="sw white"></i><svg><use href="#eye"/></svg><span>B.Silkscreen</span></div>
        <div class="row"><i class="sw mask"></i><svg><use href="#eye"/></svg><span>F.Mask</span></div>
        <div class="row"><i class="sw mask"></i><svg><use href="#eye"/></svg><span>B.Mask</span></div>
        <div class="row"><i class="sw user"></i><svg><use href="#eye"/></svg><span>User.Drawings</span></div>
        <div class="row"><i class="sw user"></i><svg><use href="#eye"/></svg><span>User.Comments</span></div>
        <div class="row"><i class="sw user"></i><svg><use href="#eye"/></svg><span>User.Eco1</span></div>
        <div class="row"><i class="sw user"></i><svg><use href="#eye"/></svg><span>User.Eco2</span></div>
        <div class="row gap"><i class="sw"></i><svg><use href="#eye"/></svg><span>Through-hole Models</span></div>
        <div class="row"><i class="sw"></i><svg><use href="#eye"/></svg><span>SMD Models</span></div>
        <div class="row"><i class="sw"></i><svg><use href="#eye"/></svg><span>Virtual Models</span></div>
        <div class="row"><i class="sw"></i><svg><use href="#eye"/></svg><span>Models not in POS File</span></div>
        <div class="row"><i class="sw"></i><svg><use href="#eye-off"/></svg><span>Models marked DNP</span></div>
        <div class="row"><i class="sw"></i><svg><use href="#eye-off"/></svg><span>Model Bounding Boxes</span></div>
        <div class="row gap"><i class="sw"></i><svg><use href="#eye"/></svg><span>Values</span></div>
        <div class="row"><i class="sw"></i><svg><use href="#eye"/></svg><span>References</span></div>
        <div class="row"><i class="sw"></i><svg><use href="#eye"/></svg><span>Footprint Text</span></div>
        <div class="row"><i class="sw"></i><svg><use href="#eye-off"/></svg><span>Off-board Silkscreen</span></div>
        <div class="row gap"><i class="sw"></i><svg><use href="#eye"/></svg><span>3D Axis</span></div>
        <div class="row short"><i class="sw start"></i><svg></svg><span>Background Start</span></div>
        <div class="row short"><i class="sw end"></i><svg></svg><span>Background End</span></div>
      </div>
      <div class="check"><i></i><span>Use board stackup colors</span></div>
      <div class="picks">
        <label>Presets (Ctrl+Tab):</label>
        <div class="select"><i></i><svg viewBox="0 0 32 32"><path d="M9 13l7-7 7 7M9 19l7 7 7-7"/></svg></div>
        <label>Viewports (Option+Tab):</label>
        <div class="select"><i></i><svg viewBox="0 0 32 32"><path d="M9 13l7-7 7 7M9 19l7 7 7-7"/></svg></div>
      </div>
    </aside>
  </div>
  <footer class="status"><span class="s1">Last render time 2 ms</span><span class="s2">dx 0.00</span><span class="s3">dy 0.00</span><span class="s4">zoom 1.00</span></footer>
</main>

<div class="behind">
  <svg class="peek" viewBox="2790 50 90 1748"><path d="M2790 106H2880" stroke="#000" stroke-width="2"/><path d="M2790 242h90v34h-90zM2790 1434h90v34h-90z" fill="#1e1e1e"/><path d="M2790 302h4M2790 345h4M2870 310q8 4 10 20M2874 355v800M2790 1286h5M2790 1308h5M2790 1370h5M2790 1392h5" stroke="#4a4a4a" stroke-width="2" fill="none"/><path d="M2790 1744H2880" stroke="#000" stroke-width="2"/><g class="peektext"><text x="2869" y="1505">te</text><text x="2869" y="1633">a</text><text x="2869" y="1665">n</text></g></svg>
  <div class="dock">
    <div class="slot on"><svg viewBox="0 0 44 44"><rect width="44" height="44" rx="10" fill="url(#finder)"/><path d="M25 0h9a10 10 0 0 1 10 10v24a10 10 0 0 1-10 10h-7q-3-8-2.500-17H19Q19 10 25 0Z" fill="#e4e8f0"/><path d="M12 13v5M33 13v5M9 29q13 12 27 0" stroke="#1c2b44" stroke-width="2" fill="none"/></svg></div>
    <div class="slot"><svg viewBox="0 0 44 44"><rect width="44" height="44" rx="10" fill="#b9b9bc"/><g><rect x="7" y="7" width="9" height="8" rx="2" fill="#6fdc58"/><rect x="18" y="7" width="9" height="8" rx="2" fill="#f3bd3f"/><rect x="28" y="7" width="9" height="8" rx="2" fill="#e88a35"/><rect x="7" y="18" width="9" height="8" rx="2" fill="#c22f27"/><rect x="18" y="18" width="9" height="8" rx="2" fill="#8b9499"/><rect x="28" y="18" width="9" height="8" rx="2" fill="#ea4a60"/><rect x="7" y="29" width="9" height="8" rx="2" fill="#8f3fc0"/><rect x="18" y="29" width="9" height="8" rx="2" fill="#3294ee"/><rect x="28" y="29" width="9" height="8" rx="2" fill="#5fc9a4"/></g></svg></div>
    <div class="slot on"><svg viewBox="0 0 44 44"><rect width="44" height="44" rx="10" fill="url(#paper)"/><circle cx="22" cy="22" r="19" fill="#f3bb3c"/><path d="M22 22L5.500 12.500A19 19 0 0 1 38.500 12.500H22Z" fill="#dc4b3d"/><path d="M5.500 12.500A19 19 0 0 0 22 41L30 27 14 26Z" fill="#3e9a4c"/><circle cx="22" cy="22" r="9" fill="#fff"/><circle cx="22" cy="22" r="7.300" fill="#3b7de8"/></svg></div>
    <div class="slot tall"><svg viewBox="0 0 44 44"><rect width="44" height="44" rx="10" fill="url(#paper)"/><circle cx="22" cy="22" r="19" fill="#2e87e2"/><circle cx="22" cy="22" r="16.500" fill="none" stroke="#8cc0f4" stroke-width="2" stroke-dasharray="1 2"/><path d="M35 11L24 24l-4-4Z" fill="#e84335"/><path d="M9 33l11-13 4 4Z" fill="#f3f5f8"/></svg></div>
    <div class="slot"><svg viewBox="0 0 44 44"><rect width="44" height="44" rx="10" fill="url(#paper)"/><path d="M0 14v-4A10 10 0 0 1 10 0h24a10 10 0 0 1 10 10v4Z" fill="#e35d52"/><text x="22" y="10.500" class="jul">JUL</text><text x="22" y="37" class="day">3</text></svg></div>
    <div class="slot on"><svg viewBox="0 0 44 44"><rect width="44" height="44" rx="10" fill="url(#paper)"/><path d="M0 11v-1A10 10 0 0 1 10 0h24a10 10 0 0 1 10 10v1Z" fill="#f7cc45"/><path d="M0 13h44M0 22h44M0 33h44" stroke="#cfcdc9"/></svg></div>
    <div class="slot"><svg viewBox="0 0 44 44"><rect width="44" height="44" rx="10" fill="url(#paper)"/><path d="M17 11h22M17 22h22M17 33h22" stroke="#c7c6c6" stroke-width="1.500"/><g fill="none" stroke-width="1.200"><circle cx="8.500" cy="11" r="3.600" stroke="#3b82f0"/><circle cx="8.500" cy="22" r="3.600" stroke="#e4493f"/><circle cx="8.500" cy="33" r="3.600" stroke="#ee9b3a"/></g><circle cx="8.500" cy="11" r="2.500" fill="#3b82f0"/><circle cx="8.500" cy="22" r="2.500" fill="#e4493f"/><circle cx="8.500" cy="33" r="2.500" fill="#ee9b3a"/></svg><b>1</b></div>
    <div class="slot"><svg viewBox="0 0 44 44"><rect width="44" height="44" rx="10" fill="#fdfdfd"/><g opacity=".86"><ellipse cx="22" cy="12" rx="6" ry="9" fill="#f19a37"/><ellipse cx="22" cy="12" rx="6" ry="9" fill="#f2dc3b" transform="rotate(45 22 22)"/><ellipse cx="22" cy="12" rx="6" ry="9" fill="#b3d145" transform="rotate(90 22 22)"/><ellipse cx="22" cy="12" rx="6" ry="9" fill="#67b96e" transform="rotate(135 22 22)"/><ellipse cx="22" cy="12" rx="6" ry="9" fill="#5da5df" transform="rotate(180 22 22)"/><ellipse cx="22" cy="12" rx="6" ry="9" fill="#7b72bf" transform="rotate(225 22 22)"/><ellipse cx="22" cy="12" rx="6" ry="9" fill="#bd6cae" transform="rotate(270 22 22)"/><ellipse cx="22" cy="12" rx="6" ry="9" fill="#e64d44" transform="rotate(315 22 22)"/></g></svg></div>
    <div class="slot on"><svg viewBox="0 0 44 44"><circle cx="22" cy="22" r="22.500" fill="#67d772"/><path d="M8 15q14-5 29 3M9 22q13-4 25 2.500M11 29q11-3 20 2.500" stroke="#101b12" fill="none" stroke-width="3.500" stroke-linecap="round"/></svg></div>
    <div class="slot on tall"><svg viewBox="0 0 44 44"><rect width="44" height="44" rx="10" fill="url(#green)"/><path d="M22 7c9 0 16 6 16 13s-7 13-16 13l-4-.5q-2 3-6 3 2-3 1.500-5Q6 27 6 20C6 13 13 7 22 7Z" fill="#e9f3e6"/></svg><b class="wide">103</b></div>
    <div class="slot"><svg viewBox="0 0 44 44"><rect width="44" height="44" rx="10" fill="url(#green)"/><rect x="7" y="12" width="21" height="20" rx="5" fill="#eef5ec"/><path d="M30 20l7-6v16l-7-6Z" fill="#dcebd8"/></svg><b>5</b></div>
    <div class="slot"><svg viewBox="0 0 44 44"><rect width="44" height="44" rx="10" fill="url(#blue)"/><rect x="7" y="12" width="30" height="20" rx="2.500" fill="#f0f1f2"/><path d="M8 13l12 11q2 2 4 0l12-11M8 31l9-9M36 31l-9-9" stroke="#a5a7aa" fill="none" stroke-width="1.300"/></svg></div>
    <div class="slot"><svg viewBox="0 0 44 44"><rect width="44" height="44" rx="10" fill="#f0f0f0"/><path d="M22 0h12a10 10 0 0 1 10 10v18L22 14Z" fill="#69cf68"/><path d="M0 10q0-6 5-9l6-1v12l-6 8-5-4Z" fill="#5ec85c"/><path d="M0 18l8 8 2 18a10 10 0 0 1-10-10Z" fill="#dd84c5"/><path d="M24 30l14 12q-3 2-8 2h-6Z" fill="#f5c43d"/><path d="M12 0h9v18h-9Z" fill="#2f76ea"/><path d="M23 20l21 14v-7L23 12ZM30 0q2 14 14 14" fill="#ececf0" stroke="#d5d5da"/><circle cx="16.500" cy="27" r="10.500" fill="#fff"/><circle cx="16.500" cy="27" r="9" fill="#3478f0"/><path d="M16.500 20l5 12-5-3-5 3Z" fill="#fff"/></svg></div>
    <div class="slot"><svg viewBox="0 0 44 44"><rect width="44" height="44" rx="10" fill="url(#blue2)"/><path d="M25 9L12 33M19 9l14 24M7 27h18M30 27h7" stroke="#fff" stroke-width="3.600" stroke-linecap="round"/></svg></div>
    <div class="slot on"><svg viewBox="0 0 44 44"><rect width="44" height="44" rx="10" fill="url(#metal)"/><circle cx="22" cy="22" r="19" fill="#2f3031"/><circle cx="22" cy="22" r="14.500" fill="none" stroke="#77797a" stroke-width="2.500"/><circle cx="22" cy="22" r="17.500" fill="none" stroke="#777" stroke-dasharray="1.500 1.500"/><circle cx="22" cy="22" r="7" fill="#5d5f60"/><path d="M22 22h14M22 22l-7 12M22 22l-7-12" stroke="#8f9192" stroke-width="2.500"/></svg><b>1</b></div>
    <div class="slot on tall"><svg viewBox="0 0 44 44"><rect width="44" height="44" rx="10" fill="#fff"/><path d="M12 7h24v8H12z" fill="#5ba4ea"/><path d="M12 15h24v7H12z" fill="#3d78d6"/><path d="M12 22h24v7H12z" fill="#2b57bd"/><path d="M12 29h24v7H12z" fill="#22428f"/><rect x="4" y="14" width="16" height="16" rx="1.500" fill="#2452ac"/><text x="12" y="26.500" class="w">W</text></svg></div>
    <div class="slot on"><svg viewBox="0 0 44 44"><rect width="44" height="44" rx="10" fill="#cb4446"/><use href="#express" x="6" y="9" width="32" height="27" fill="#fff"/></svg></div>
    <div class="slot on"><svg class="round" viewBox="0 0 52 52"><circle cx="26" cy="26" r="26" fill="#000"/><circle cx="26" cy="26" r="22.500" fill="#fff"/><path d="M10 42V20q0-6 6-6h22q4 0 5 2v10H24v22q-9 0-14-6Z" fill="#bb4131"/><circle cx="37" cy="20" r="3.500" fill="#fff"/></svg></div>
    <div class="slot on"><svg viewBox="0 0 44 44"><rect width="44" height="44" rx="10" fill="#fff"/><path d="M29 7l8 4v22l-8 4Z" fill="#4aa0e8"/><path d="M29 7v9L10 31l-4-3ZM6 16l4-3 19 15v9Z" fill="#2b73b8"/></svg></div>
    <div class="slot on"><svg viewBox="0 0 44 44"><rect width="44" height="44" rx="10" fill="url(#paper)"/><circle cx="22" cy="22" r="19" fill="#66da76"/><path d="M22 20L14 4q8-3 16 0Z" fill="#2b6fe4"/><circle cx="22" cy="22" r="12" fill="none" stroke="#9deaa6"/><circle cx="22" cy="22" r="6" fill="#fff"/><circle cx="22" cy="22" r="4" fill="#3478e6"/></svg></div>
    <div class="slot on"><svg viewBox="0 0 44 44"><rect x="1" y="1" width="42" height="42" rx="9" fill="#283fb8"/><text x="6" y="34" class="ki">K</text><path d="M29 34v-3h1.500V19H29v-3h7v15h1.500v3z" fill="#fff"/><circle cx="33" cy="11" r="3.500" fill="#f0742e"/></svg></div>
    <div class="slot on tall"><svg viewBox="0 0 44 44"><rect width="44" height="44" rx="8" fill="#1f5f18"/><path d="M6 0v14l6 6v8l-8 12M11 0v12l6 6v12l-7 12M16 0v9l8 8M24 0l10 12h10M21 30l-6 12" fill="none" stroke="#79b06c" stroke-width="2"/><path d="M22 0h22v8H32ZM22 20l8-2 14 4v22H20v-12Z" fill="#5e9a50"/><circle cx="6" cy="26" r="4" fill="#f08a2c"/><circle cx="6" cy="26" r="2" fill="#fff"/><circle cx="37" cy="16" r="4" fill="#f08a2c"/><circle cx="37" cy="16" r="2" fill="#fff"/><rect x="30" y="27" width="11" height="6" rx="3" fill="#de9a3c"/><path d="M30 44q0-4 4-4h4q3 0 3 4Z" fill="#de9a3c"/></svg></div>
    <div class="slot on"><svg viewBox="0 0 44 44"><rect x="2" y="3" width="40" height="42" rx="9" fill="#1f4590"/><rect x="2" y="0" width="40" height="37" rx="9" fill="#4a86ee"/><rect x="6" y="4" width="32" height="28" rx="4" fill="#1d3f85"/><path d="M8 8h28v23H8z" fill="#fff"/><path d="M15 19l6 6 10-12" stroke="#36404d" stroke-width="3" fill="none"/><path d="M15 32h14v5H15z" fill="#9aa2ad"/><path d="M15 37h14v6H15z" fill="#5c93ef"/></svg></div>
    <hr>
    <svg class="item folder" viewBox="0 0 46 46"><path d="M5 2h34v12H5z" fill="#46a2d8"/><path d="M7 2h18l11 10H7z" fill="#f1f1f1"/><path d="M21 1h5v11h-5z" fill="#666"/><path d="M0 11q0-4 4-4h8l6 4h24q4 0 4 4v4H0z" fill="#4aa8dc"/><rect y="13" width="46" height="32" rx="3" fill="#72c6f4"/></svg>
    <svg class="item doc" viewBox="0 0 56 52"><path d="M10 0h32v52H10z" fill="#f6f4f2"/><path d="M10 0h32v20H10z" fill="#b96a50"/><path d="M10 4h32v3H10z" fill="#5d2c24"/><path d="M14 20a12 12 0 0 1 24 0z" fill="#d98c6c"/><circle cx="26" cy="17" r="5" fill="#fff"/><circle cx="26" cy="17" r="2.500" fill="#b77ca0"/><path d="M20 24h12M14 30h8M13 36h7M30 36h7" stroke="#999" stroke-width="1.500"/><rect x="35" y="34" width="16" height="16" rx="4" fill="#cb4446"/><use href="#express" x="37" y="38" width="12" height="9" fill="#fff"/></svg>
    <svg class="item map" viewBox="0 0 56 42"><path d="M0 0h54v32H0z" fill="#2b4160"/><path d="M0 0h12v32H0z" fill="#1d2530"/><path d="M1 6h10v3H1z" fill="#3b8df0"/><path d="M12 12q10-8 14 4t8 4l-6 4-16-8Z" fill="#24554a"/><path d="M12 4l42 24M30 0l-8 32M54 8L20 30M44 0v32" stroke="#45648c" fill="none"/><rect x="36" y="24" width="18" height="16" rx="4" fill="#eee"/><circle cx="45" cy="32" r="6.500" fill="#5fd672"/><path d="M45 32l-3-6h6z" fill="#2b6fe4"/></svg>
    <svg class="item board" viewBox="0 0 56 42"><path d="M0 0h54v30H0z" fill="#3a3034"/><path d="M1 3h45v26H1z" fill="#8f2d4c"/><path d="M4 7h40M4 20h40" stroke="#5bb4c8" stroke-width="2.500" stroke-dasharray="3 11"/><path d="M2 12h42M6 24h34" stroke="#d05a74" stroke-dasharray="4 3"/><rect x="36" y="24" width="18" height="16" rx="3" fill="#2c6e22"/><path d="M38 30h6l4 4M42 26v12" stroke="#79b06c" fill="none"/><circle cx="50" cy="30" r="2" fill="#f08a2c"/></svg>
    <svg class="item trash" viewBox="0 0 44 50"><path d="M2 6h40l-5 40q-15 6-30 0z" fill="url(#trash)"/><path d="M3 5l8-4 8 2 7-3 8 4 7 2-4 4H7z" fill="#e4e4e4"/><path d="M9 4l5 4 4-5 6 5 4-5 6 5" stroke="#5a5a60" stroke-width="2" fill="none"/></svg>
  </div>
</div>
</div>
</body>
</html>
```
FILE: styles.css
```css
* { box-sizing: border-box; }
body { margin: 0; width: 2880px; height: 1800px; overflow: hidden; background: #0e0a24; font-family: Inter, "Liberation Sans", sans-serif; font-size: 25px; color: #e3e2e3; }
svg { display: block; flex: none; }
.defs { position: absolute; }

.menubar { display: flex; align-items: center; height: 50px; padding: 0 0 3px; background: linear-gradient(90deg, #451b8b, #3a1996 25%, #2c169e 50%, #28149a 75%, #261287); color: #ece9f6; white-space: nowrap; }
.apple { width: 26px; height: 32px; margin: 0 0 2px 40px; }
.m { font-weight: 500; padding-bottom: 1px; }
.m1 { font-weight: 700; margin-left: 41px; width: 118px; }
.m2 { width: 84px; } .m3 { width: 88px; } .m4 { width: 99px; } .m5 { width: 187px; } .m6 { width: 141px; } .m7 { width: 956px; }
.tray { width: 800px; height: 48px; }
.ca { font: 700 19px Inter, sans-serif; fill: #2a1599; stroke: none; }
.clock { margin-left: 10px; padding-bottom: 1px; font-weight: 500; letter-spacing: .55px; }

.desk { display: flex; height: 1750px; }
.window { display: flex; flex-direction: column; width: 2790px; height: 1749px; border: 2px solid #5d5d60; border-top-color: #747378; border-radius: 22px; overflow: hidden; background: #323232; box-shadow: 0 0 0 1px #000; z-index: 1; flex: none; }
.titlebar { display: flex; align-items: center; height: 55px; padding: 0 0 1px 14px; background: #36353a; border-bottom: 2px solid #000; flex: none; }
.light { width: 24px; height: 24px; border-radius: 50%; margin-right: 16px; }
.red { background: #ec6a5e; } .grey { background: #57565b; } .green { background: #61c554; }
h1 { margin: 0; flex: 1; text-align: center; padding: 0 136px 1px 0; font-size: 26px; font-weight: 700; color: #b5b4b9; }
.toolbar { display: flex; align-items: center; height: 69px; padding: 0 0 1px 6px; border-bottom: 2px solid #1c1c1c; flex: none; }
.tool { width: 64px; height: 48px; }
.sep { width: 2px; height: 44px; margin: 0 8px; background: #535353; }
.active { width: 60px; height: 60px; margin-left: 1px; border: 2px solid #41608c; background: #161d2c; }
.active svg { width: 60px; height: 60px; margin: -2px; }

.content { display: flex; height: 1566px; flex: none; }
.canvas { width: 2392px; height: 1566px; background: linear-gradient(#cccce6, #666680); flex: none; }
.scene { width: 2392px; height: 1564px; }
.trace { fill: none; stroke: #2f4218; stroke-width: 1.1px; }
.trace path, .court path, .silk { vector-effect: non-scaling-stroke; }
.court { fill: none; stroke: #101c14; stroke-width: 1.2px; }
.silk { fill: none; stroke: #bfc9c1; stroke-width: 1.1px; }
.ref { font: 32px "Liberation Mono", monospace; fill: #dfe6e0; }
.refr { font-size: 30px; }
.tiny { font-size: 19px; }

.panel { display: flex; flex-direction: column; width: 379px; margin-left: 16px; border-left: 1px solid #3e3e3e; letter-spacing: -.64px; }
h2 { margin: -2px 0 0 -1px; height: 34px; line-height: 32px; padding-left: 6px; background: #1f1f1f; font-size: 24px; font-weight: 400; letter-spacing: -.2px; flex: none; }
.rows { padding: 8px 0 0 9px; height: 1309px; flex: none; }
.row { display: flex; align-items: center; height: 36px; white-space: nowrap; }
.row.gap { margin-top: 22px; }
.row.short { height: 34px; }
.row span { margin-left: 10px; padding-bottom: 1px; }
.row.short span { padding: 0; }
.row svg { width: 32px; height: 32px; margin-left: 10px; }
.sw { width: 32px; height: 24px; }
.body { background: repeating-conic-gradient(#4a4030 0 25%, #453b2c 0 50%) 0 0 / 24px 24px; }
.cu { background: #b29c34; } .paste { background: #808080; } .white { background: #e6e6e6; }
.mask { background: repeating-conic-gradient(#415646 0 25%, #384f40 0 50%) 0 0 / 24px 24px; }
.user { background: repeating-conic-gradient(#000 0 25%, #222 0 50%) 0 0 / 24px 24px; }
.start { background: #cccce6; margin-top: -2px; } .end { background: #666680; margin-top: -2px; }
.check { display: flex; align-items: center; height: 34px; margin-bottom: 3px; padding-left: 13px; }
.check i { width: 28px; height: 28px; margin-right: 12px; border-radius: 7px; background: linear-gradient(#545454, #696969); }
.picks { border-top: 2px solid #484848; padding: 16px 12px 0 13px; }
.picks label { display: block; height: 36px; line-height: 35px; }
.select { display: flex; align-items: center; width: 352px; height: 40px; margin-bottom: 6px; padding: 0 4px 0 16px; border-radius: 10px; background: #656565; box-shadow: inset 0 1px #777; }
.select i { flex: 1; height: 3px; margin-right: 6px; border-top: 1px solid #4c4c4c; border-bottom: 2px solid #989898; }
.select svg { width: 32px; height: 32px; border-radius: 7px; background: linear-gradient(#3a7fdc, #2a66c4); fill: none; stroke: #fff; stroke-width: 3.500; stroke-linecap: round; stroke-linejoin: round; }

.status { display: flex; align-items: center; flex: 1; border-top: 2px solid #000; background: linear-gradient(#323232, #2b2b2b); font-size: 23px; letter-spacing: -.38px; color: #a8a8a8; white-space: nowrap; }
.status span { padding-top: 1px; }
.s1 { margin-left: 8px; width: 2010px; } .s2 { width: 260px; } .s3 { width: 260px; }

.behind { width: 90px; height: 1749px; background: #2b2b2b linear-gradient(#2a2830 56px, #2b2b2b 56px); border-top: 2px solid #4c4b50; border-right: 2px solid #4c4c4e; border-radius: 0 22px 22px 0; display: grid; }
.peek, .dock { grid-area: 1 / 1; }
.peek { width: 90px; height: 1748px; }
.peektext { font: 25px Inter, sans-serif; fill: #cfcfcf; }
.dock { width: 76px; height: 1672px; margin: 36px 0 0 5px; padding-top: 4px; border: 2px solid #565559; border-radius: 20px; background: linear-gradient(#2c2a31, #45434a 35%, #37353b 70%, #353338); display: flex; flex-direction: column; align-items: flex-start; box-shadow: 0 0 0 1px #111; }
.slot { position: relative; display: flex; align-items: center; height: 58px; padding-left: 10px; flex: none; }
.slot > svg { width: 44px; height: 44px; overflow: visible; }
.slot > .round { width: 52px; height: 52px; margin-left: -4px; }
.tall { margin-top: 2px; }
.on::after { content: ""; width: 6px; height: 6px; margin-left: 7px; border-radius: 50%; background: #bdbcc0; }
.slot:has(.round)::after { margin-left: 3px; }
.slot b { position: absolute; left: 42px; top: 5px; width: 19px; height: 19px; border-radius: 10px; background: #e4523f; color: #fff; font: 500 11px/19px Inter, sans-serif; text-align: center; }
.slot b.wide { left: 38px; width: 23px; }
.jul { font: 700 8px Inter, sans-serif; fill: #fff; text-anchor: middle; }
.day { font: 300 27px Inter, sans-serif; fill: #2a2a2a; text-anchor: middle; }
.w { font: 700 12px Inter, sans-serif; fill: #fff; text-anchor: middle; }
.ki { font: 700 30px "Noto Sans", sans-serif; fill: #fff; }
.dock hr { width: 56px; height: 2px; margin: 12px 0 16px 8px; border: 0; background: #737276; flex: none; }
.folder { width: 46px; height: 46px; margin-left: 9px; }
.doc { width: 56px; height: 52px; margin: 9px 0 0 7px; }
.map { width: 56px; height: 42px; margin: 16px 0 0 7px; }
.board { width: 56px; height: 42px; margin: 18px 0 0 7px; }
.trash { width: 40px; height: 48px; margin: 8px 0 0 13px; }
```
